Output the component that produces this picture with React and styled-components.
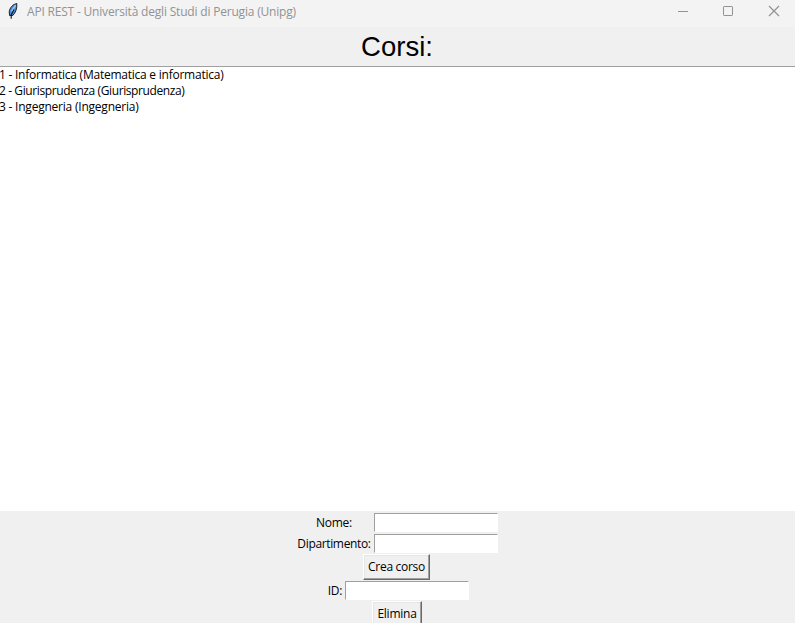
import React from "react";
import styled, { createGlobalStyle } from "styled-components";

const GlobalStyle = createGlobalStyle`
  * { box-sizing: border-box; }
  body { margin: 0; overflow: hidden; background: #f0f0f0; }
`;

const Window = styled.div`
  width: 795px;
  height: 623px;
  display: flex;
  flex-direction: column;
  overflow: hidden;
  background: #f0f0f0;
  color: #000;
  font-family: "Open Sans", "Noto Sans", sans-serif;
  font-size: 12px;
  line-height: 16px;
  white-space: nowrap;
`;

const TitleBar = styled.header`
  flex: none;
  height: 27px;
  display: flex;
  align-items: flex-start;
  padding: 3px 15px 0 7px;
  background: #f3f3f3;
  color: #929292;
`;

const FeatherIcon = styled.svg`
  flex: none;
  width: 11px;
  height: 16px;
`;

const Title = styled.span`
  margin-left: 9px;
  line-height: 18px;
  letter-spacing: ${(p) => p.$spacing}px;
`;

const WindowControls = styled.div`
  margin-left: auto;
  display: flex;
  gap: 34px;
  padding-top: 2px;

  svg { width: 12px; height: 12px; display: block; }
  svg:first-child { margin-right: -1px; }
`;

const Heading = styled.h1`
  flex: none;
  margin: 0;
  height: 39px;
  padding-right: 1px;
  text-align: center;
  font: 400 27.5px/39px "Liberation Sans", Arial, sans-serif;
`;

const CourseList = styled.ul`
  flex: none;
  height: 445px;
  margin: 0;
  padding: 0;
  list-style: none;
  border-top: 1px solid #a0a0a0;
  background: #fff;
`;

const CourseItem = styled.li`
  height: 16px;
  margin-left: -1px;
  letter-spacing: ${(p) => p.$spacing}px;
`;

const Form = styled.form`
  display: flex;
  flex-direction: column;
  align-items: center;
  padding: 2px 1px 0 0;
`;

const Fields = styled.div`
  display: grid;
  grid-template-columns: 76px 124px;
  grid-auto-rows: 19px;
  row-gap: 2px;
  margin: 0 0 1px 2px;
`;

const Label = styled.label`
  line-height: 20px;
  text-align: center;
  letter-spacing: ${(p) => p.$spacing || 0}px;
  margin-left: -4px;
`;

const Entry = styled.input`
  width: 124px;
  height: 19px;
  padding: 0 2px;
  border: 1px solid #fff;
  border-top-color: #a0a0a0;
  border-left-color: #a0a0a0;
  border-radius: 0;
  outline: none;
  background: #fff;
  font: inherit;
`;

const IdRow = styled.div`
  display: flex;
  gap: 3px;
  height: 20px;
  margin: 1px 0 0 7px;
`;

const Button = styled.button`
  width: ${(p) => p.$width}px;
  height: 26px;
  margin-right: ${(p) => p.$offset || 0}px;
  padding: 0;
  border: 1px solid;
  border-color: #fff #696969 #696969 #fff;
  border-radius: 0;
  box-shadow: inset -1px -1px #a0a0a0, inset 1px 1px #e6e6e6;
  background: #f0f0f0;
  color: #000;
  font: inherit;
  line-height: 22px;
  letter-spacing: ${(p) => p.$spacing || 0}px;
`;

const courses = [
  { text: "1 - Informatica (Matematica e informatica)", spacing: -0.24 },
  { text: "2 - Giurisprudenza (Giurisprudenza)", spacing: -0.4 },
  { text: "3 - Ingegneria (Ingegneria)", spacing: -0.22 },
];

export default function App() {
  return (
    <>
      <GlobalStyle />
      <Window>
        <TitleBar>
          <FeatherIcon viewBox="0 0 11 16">
            <path d="M9.8.5C6 1.2 2.8 4.5 2.2 8.8L2.6 12.5H5.8C8.4 10 10.3 5.5 9.8.5Z" fill="#4b8bd8" stroke="#111" strokeWidth="0.9" />
            <path d="M8.6 2.2L4.6 8.5" stroke="#9cc8f5" strokeWidth="1.5" />
            <path d="M7 6.5L4.2 12V15.8" fill="none" stroke="#111" strokeWidth="1.1" />
          </FeatherIcon>
          <Title $spacing={-0.19}>API REST - Università degli Studi di Perugia (Unipg)</Title>
          <WindowControls>
            <svg viewBox="0 0 12 12"><path d="M1 6.5H11" stroke="#929292" /></svg>
            <svg viewBox="0 0 12 12"><rect x="1.5" y="1.5" width="9" height="9" rx="0.6" fill="none" stroke="#929292" /></svg>
            <svg viewBox="0 0 12 12"><path d="M1 1L11 11M11 1L1 11" stroke="#929292" strokeWidth="1.2" /></svg>
          </WindowControls>
        </TitleBar>
        <Heading>Corsi:</Heading>
        <CourseList>
          {courses.map((c) => (
            <CourseItem key={c.text} $spacing={c.spacing}>{c.text}</CourseItem>
          ))}
        </CourseList>
        <Form onSubmit={(e) => e.preventDefault()}>
          <Fields>
            <Label htmlFor="nome" $spacing={-0.3}>Nome:</Label>
            <Entry id="nome" />
            <Label htmlFor="dip" $spacing={-0.35}>Dipartimento:</Label>
            <Entry id="dip" />
          </Fields>
          <Button type="button" $width={67} $offset={1} $spacing={-0.3}>Crea corso</Button>
          <IdRow>
            <Label htmlFor="cid" $spacing={-0.2}>ID:</Label>
            <Entry id="cid" />
          </IdRow>
          <Button type="button" $width={50} $spacing={-0.25}>Elimina</Button>
        </Form>
      </Window>
    </>
  );
}
